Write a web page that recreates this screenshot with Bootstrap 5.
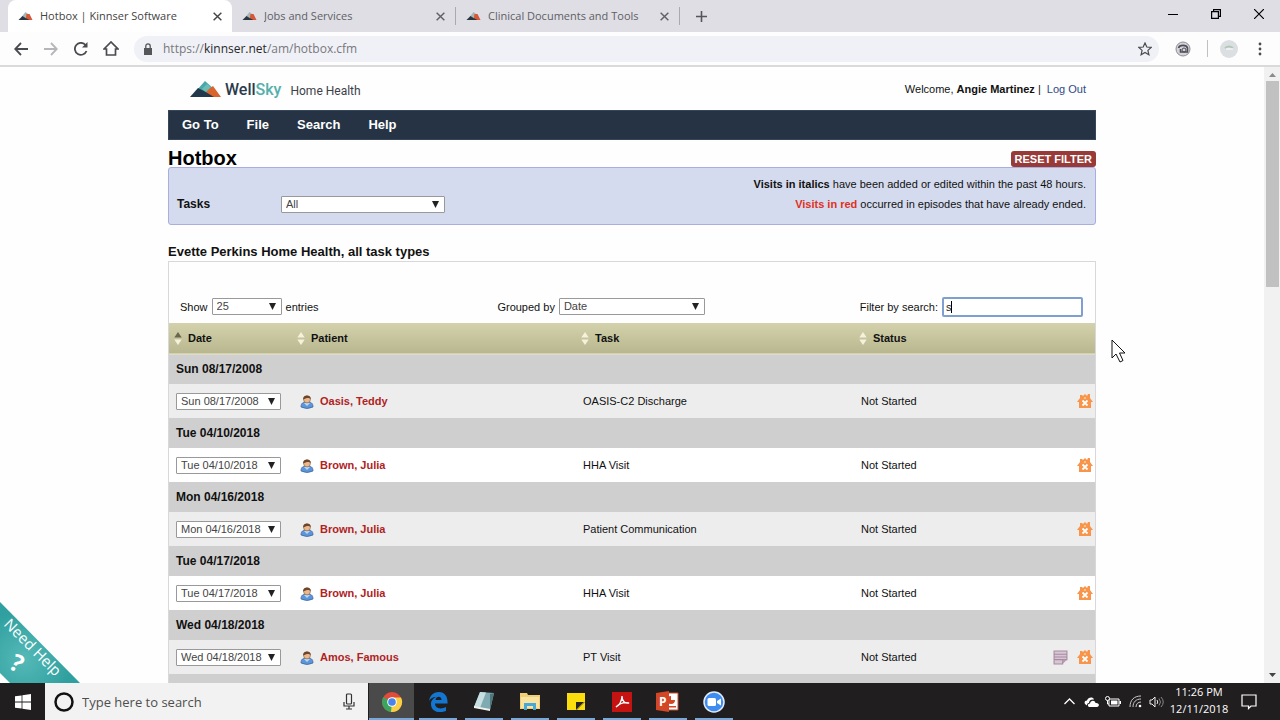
<!DOCTYPE html>
<html lang="en">
<head>
<meta charset="utf-8">
<meta name="viewport" content="width=device-width, initial-scale=1">
<title>Hotbox | Kinnser Software</title>
<link href="https://cdn.jsdelivr.net/npm/bootstrap@5.3.0/dist/css/bootstrap.min.css" rel="stylesheet">
<style>
  :root { --ui: "Open Sans", "Noto Sans", sans-serif; --page: "Liberation Sans", Arial, sans-serif; }
  body { font-family: var(--page); font-size: 11px; line-height: 16px; color: #111; background: #fff; }
  svg { display: block; flex: none; }
  button { border: 0; background: none; padding: 0; color: inherit; }

  /* browser window */
  .tabstrip { height: 32px; background: #dedee4; font: 11px/16px var(--ui); color: #5f6064; padding-left: 8px; }
  .browser-tab { width: 224px; padding: 0 9px 0 10px; gap: 7px; }
  .browser-tab.current { background: #fff; color: #444; border-radius: 8px 8px 0 0; }
  .browser-tab.divided { border-right: 1px solid #a9a9ae; height: 18px; }
  .win-btn { width: 43px; }
  .addressbar { height: 35px; border-bottom: 2px solid #dadada; background: #fdfdfe; padding-left: 6px; }
  .nav-btn { width: 30px; color: #4a4b4f; }
  .urlbox { background: #f0f1f6; border-radius: 13px; height: 26px; padding: 0 7px; margin-left: 8px; }
  .url-text { font: 12px/18px var(--ui); color: #77787c; }
  .url-text b { font-weight: 400; color: #26272a; }
  .more-btn { padding: 0 16px 0 18px; }

  /* page */
  .viewport { min-height: 0; background: #fefefe; }
  .site { width: 928px; max-width: 100%; }
  .masthead { height: 43px; padding: 1px 10px 0 22px; }
  .brand-name { font: 500 16px/18px Roboto, sans-serif; color: #2b3b4b; padding-top: 1px; }
  .brand-name span { color: #55b0ac; }
  .brand-unit { font: 12px/18px Roboto, sans-serif; color: #3c4149; padding-top: 3px; margin-left: 9px; }
  .account a { color: #2f4a86; }
  .menu-bar { height: 30px; background: #253344; border: 1px solid #35465a; padding: 0 13px; gap: 28px; font-size: 13px; font-weight: 700; }
  .menu-bar a { color: #fff; text-decoration: none; }
  .title-row { height: 27px; }
  .page-title { font-size: 20px; line-height: 18px; font-weight: 700; color: #000; margin: 0; }
  .reset-btn { background: #983a38; color: #fff; font-weight: 700; font-size: 11px; line-height: 16px; border-radius: 3px; padding: 0 4px; }
  .filter-panel { background: #d5dbee; border: 1px solid #a9aee0; border-radius: 3px; height: 58px; padding: 6px 9px 0 8px; }
  .task-filter { padding-top: 10px; }
  .task-filter label { width: 104px; font-size: 12px; }
  .legend-lines { line-height: 20px; }
  .red-note { color: #e0311f; }
  .section-title { font-size: 13px; line-height: 18px; font-weight: 700; margin: 18px 0 0; color: #111; }
  .grid-box { border: 1px solid #d8d8d8; border-bottom: 0; }
  .grid-tools { height: 61px; padding: 28px 12px 0 11px; }
  .picker, .search-field { height: 17px; border: 1px solid #999; border-radius: 1px; background-color: #fff; color: #444; font-size: 11px; line-height: 15px; padding: 0 14px 0 4px; }
  .picker { appearance: none; background-image: url("data:image/svg+xml,%3Csvg xmlns='http://www.w3.org/2000/svg' width='7' height='7'%3E%3Cpath d='M0 0h7L3.5 7z' fill='%23222'/%3E%3C/svg%3E"); background-repeat: no-repeat; background-position: right 5px center; }
  .w-tasks { width: 164px; } .w-size { width: 70px; } .w-group { width: 146px; } .w-date { width: 105px; }
  .search-field { width: 141px; height: 20px; border: 2px solid #7f9fd0; border-radius: 2px; padding: 0 2px; outline: 0; color: #222; caret-color: transparent; }
  .caret-mark { left: 9px; top: 4px; width: 1px; height: 12px; background: #000; }

  .task-grid { --bs-table-color: #111; table-layout: fixed; font-size: 11px; }
  .task-grid > :not(caption) > * > * { padding: 0 7px; border: 0; box-shadow: none; vertical-align: middle; }
  .task-grid .c-date { width: 123px; } .task-grid .c-patient { width: 284px; } .task-grid .c-task { width: 278px; }
  .task-grid thead tr { height: 31px; background: linear-gradient(#d3d2ac, #b9b78f); border-bottom: 1px solid #dedcc8; --bs-table-bg: transparent; }
  .task-grid thead th { padding: 0 5px !important; }
  .task-grid thead th div { gap: 6px; }
  .group-row { height: 30px; --bs-table-bg: #cfcfcf; font-size: 12px; }
  .task-row { height: 34px; --bs-table-bg: #fff; }
  .task-row.alt { --bs-table-bg: #ededed; }
  .task-row td:last-child { padding-right: 2px !important; }
  .patient { color: #b0231f; font-weight: 700; text-decoration: none; gap: 6px; padding-left: 1px; }
  .row-actions { gap: 9px; }
  .help-ribbon { left: 0; bottom: 0; }
  .pointer { left: 1111px; top: 272px; }
  .scroll-rail { width: 16px; background: #f1f1f1; padding: 6px 1px 6px 2px; }
  .scroll-thumb { height: 206px; background: #c1c1c1; margin-top: 4px; }

  /* desktop bar */
  .taskbar { height: 37px; background: #211e1f; font-family: var(--ui); color: #fff; }
  .start-btn { width: 45px; }
  .desk-search { width: 323px; background: #f2f2f2; padding: 0 12px 0 9px; gap: 8px; }
  .desk-search input { border: 0; background: none; outline: 0; padding: 0; font: 13px/18px var(--ui); min-width: 0; }
  .desk-search input::placeholder { color: #4e4e4e; opacity: 1; }
  .app-btn { width: 46px; border-right: 1px solid #211e1f; padding-top: 2px; }
  .app-btn::after { content: ""; height: 2px; width: 38px; background: #76a9dc; }
  .app-btn.running { background: #4b4a4b; margin-left: 1px; }
  .app-btn.running::after { width: 45px; }
  .tray-btn { width: 22px; }
  .clock { width: 62px; font: 11px/17px var(--ui); text-align: center; padding-bottom: 3px; }
  .notice-btn { width: 38px; margin-right: 12px; }
</style>
</head>
<body class="vh-100 d-flex flex-column overflow-hidden">

<svg width="0" height="0" class="position-absolute" aria-hidden="true">
  <symbol id="favicon" viewBox="0 0 14 10"><path d="M3 6l4-5 4 3-2 5z" fill="#a9b6b6"/><path d="M8 3l3 0 3 6H7z" fill="#d5583a"/><path d="M0 9l4-4 3 2 4 2z" fill="#293540"/></symbol>
  <symbol id="close" viewBox="0 0 10 10"><path d="M1.500 1.500l7 7m0-7l-7 7" stroke="currentColor" stroke-width="1.300"/></symbol>
  <symbol id="person" viewBox="0 0 14 15"><path d="M1 13c0-4 2-5 6-5s6 1 6 5q-6 3-12 0z" fill="#5d96d8" stroke="#3b68a4" stroke-width=".8"/><path d="M4 9l3 3 3-3z" fill="#b9d8f5"/><circle cx="7" cy="5.500" r="3.400" fill="#e9b98e" stroke="#8a5a36" stroke-width=".6"/><path d="M3.200 5.500C2.500 0 11.500 0 10.800 5.500 9.500 3 6 4 3.200 5.500z" fill="#6f4428"/></symbol>
  <symbol id="house" viewBox="0 0 16 15"><path d="M8 0l2 2 1-2h2v4l3 4h-2v6H2V8H0l3-4V1h2l1 1z" fill="#f7954a"/><path d="M5.500 6.500l5 5M10.500 6.500l-5 5" stroke="#fff" stroke-width="1.800"/><circle cx="8" cy="4" r="1" fill="#ffd2a8"/></symbol>
  <symbol id="note" viewBox="0 0 14 14"><path d="M1 1h12v8H9v4H1z" fill="#d9c6d5" stroke="#a78aa2"/><path d="M1 4h12M1 6.500h12M1 9h8" stroke="#a78aa2"/><path d="M9 13l4-4H9z" fill="#b79bb1"/></symbol>
  <symbol id="sort" viewBox="0 0 8 14"><path d="M4 0l4 6H0z" fill="#f5f2dc"/><path d="M4 14l4-6H0z" fill="#f5f2dc"/></symbol>
  <symbol id="sort-up" viewBox="0 0 8 14"><path d="M4 0l4 6H0z" fill="#67664e"/><path d="M4 14l4-6H0z" fill="#f5f2dc"/></symbol>
</svg>

<header>
  <div class="tabstrip d-flex align-items-center">
    <div class="browser-tab current d-flex align-items-center h-100"><svg width="15" height="10"><use href="#favicon"/></svg><span class="flex-grow-1 text-truncate">Hotbox | Kinnser Software</span><button aria-label="Close tab"><svg width="11" height="11"><use href="#close"/></svg></button></div>
    <div class="browser-tab divided d-flex align-items-center"><svg width="15" height="10"><use href="#favicon"/></svg><span class="flex-grow-1 text-truncate">Jobs and Services</span><button aria-label="Close tab"><svg width="11" height="11"><use href="#close"/></svg></button></div>
    <div class="browser-tab divided d-flex align-items-center"><svg width="15" height="10"><use href="#favicon"/></svg><span class="flex-grow-1 text-truncate">Clinical Documents and Tools</span><button aria-label="Close tab"><svg width="11" height="11"><use href="#close"/></svg></button></div>
    <button class="ms-3" aria-label="New tab"><svg width="11" height="11" viewBox="0 0 11 11"><path d="M5.500 0v11M0 5.500h11" stroke="#55565a" stroke-width="1.600"/></svg></button>
    <div class="ms-auto d-flex align-items-center text-black pb-1">
      <button class="win-btn" aria-label="Minimize"><svg class="mx-auto" width="10" height="10"><path d="M0 5.500h10" stroke="#000"/></svg></button>
      <button class="win-btn" aria-label="Restore"><svg class="mx-auto" width="10" height="10" viewBox="0 0 10 10" fill="none" stroke="#000" stroke-width="1.200"><path d="M.6 2.600h6.800v6.800H.6zM2.600 2.600v-2h6.800v6.800h-2"/></svg></button>
      <button class="win-btn" aria-label="Close"><svg class="mx-auto" width="10" height="10"><path d="M0 0l10 10M10 0L0 10" stroke="#000" stroke-width="1.200"/></svg></button>
    </div>
  </div>
  <div class="addressbar d-flex align-items-center">
    <button class="nav-btn" aria-label="Back"><svg class="mx-auto" width="14" height="14" viewBox="0 0 14 14" fill="none" stroke="currentColor" stroke-width="1.800"><path d="M14 7H1.500M7 1L1.200 7 7 13"/></svg></button>
    <button class="nav-btn" aria-label="Forward"><svg class="mx-auto" width="14" height="14" viewBox="0 0 14 14" fill="none" stroke="#b5b6b9" stroke-width="1.800"><path d="M0 7h12.500M7 1l5.800 6L7 13"/></svg></button>
    <button class="nav-btn" aria-label="Reload"><svg class="mx-auto" width="14" height="14" viewBox="0 0 14 14" fill="none" stroke="currentColor" stroke-width="1.800"><path d="M12.500 9A6 6 0 1 1 11.500 3l1 1.200"/><path d="M13.500 0v5.500H8z" fill="currentColor" stroke="none"/></svg></button>
    <button class="nav-btn" aria-label="Home"><svg class="mx-auto" width="16" height="15" viewBox="0 0 16 15" fill="none" stroke="currentColor" stroke-width="1.700"><path d="M1 8l7-7 7 7h-2.500v6h-9V8z"/></svg></button>
    <div class="urlbox flex-grow-1 d-flex align-items-center">
      <svg class="me-2" width="14" height="12" viewBox="0 0 14 12"><path d="M3 5h8v7H3z" fill="#55565a"/><path d="M4.800 5V3a2.200 2.200 0 0 1 4.400 0v2" fill="none" stroke="#55565a" stroke-width="1.300"/></svg>
      <span class="url-text flex-grow-1">https://<b>kinnser.net</b>/am/hotbox.cfm</span>
      <button aria-label="Bookmark"><svg width="14" height="14" viewBox="0 0 14 14"><path d="M7 1l1.800 4 4.400.4-3.300 3 1 4.300L7 10.400l-3.900 2.300 1-4.300-3.300-3L5.200 5z" fill="none" stroke="#4a4b4f" stroke-width="1.200"/></svg></button>
    </div>
    <button class="ms-3" aria-label="Extension"><svg width="16" height="16" viewBox="0 0 16 16"><circle cx="8" cy="8" r="7" fill="#d4d4d8" stroke="#8d8d94"/><path d="M3.500 7c1-3.500 8-3.500 9 0v4h-7V8" fill="none" stroke="#4d4d58" stroke-width="1.600"/><circle cx="9" cy="9" r="2" fill="none" stroke="#4d4d58"/></svg></button>
    <span class="vr ms-3 my-2"></span>
    <button class="ms-2 ps-1" aria-label="Profile"><svg width="18" height="18" viewBox="0 0 18 18"><circle cx="9" cy="9" r="9" fill="#dcdfe2"/><path d="M5 8q4-3 8 0" stroke="#b3c6b8" stroke-width="2" fill="none"/><path d="M6 9h7" stroke="#fff"/></svg></button>
    <button class="more-btn" aria-label="Browser menu"><svg width="8" height="14" viewBox="0 0 8 14" fill="#4a4b4f"><circle cx="4" cy="2" r="1.400"/><circle cx="4" cy="7" r="1.400"/><circle cx="4" cy="12" r="1.400"/></svg></button>
  </div>
</header>

<div class="viewport flex-grow-1 d-flex position-relative overflow-hidden">
  <main class="flex-grow-1 overflow-hidden">
    <div class="site mx-auto">
      <div class="masthead d-flex align-items-center">
        <svg width="31" height="17" viewBox="0 0 31 17"><path d="M6 10L15 0l9 8-6 7z" fill="#4ba8a8"/><path d="M16 10l7-5 8 11H18z" fill="#d9652d"/><path d="M0 16l8-9 6 3 10 6z" fill="#22384b"/><path d="M12 8l5-5 4 3-5 5z" fill="#6cbcb8"/></svg>
        <span class="brand-name ms-1">Well<span>Sky</span></span>
        <span class="brand-unit">Home Health</span>
        <div class="account ms-auto">Welcome, <b>Angie Martinez</b> |&nbsp; <a href="#" class="text-decoration-none">Log Out</a></div>
      </div>
      <nav class="menu-bar d-flex align-items-center"><a href="#">Go To</a><a href="#">File</a><a href="#">Search</a><a href="#">Help</a></nav>
      <div class="title-row d-flex justify-content-between align-items-end">
        <h1 class="page-title">Hotbox</h1>
        <button class="reset-btn">RESET FILTER</button>
      </div>
      <section class="filter-panel d-flex justify-content-between">
        <div class="task-filter d-flex align-items-center">
          <label for="tasks" class="fw-bold">Tasks</label>
          <select id="tasks" class="picker w-tasks"><option>All</option></select>
        </div>
        <div class="legend-lines text-end"><b>Visits in italics</b> have been added or edited within the past 48 hours.<br><b class="red-note">Visits in red</b> occurred in episodes that have already ended.</div>
      </section>
      <h2 class="section-title">Evette Perkins Home Health, all task types</h2>
      <section class="grid-box">
        <div class="grid-tools d-flex align-items-center justify-content-between">
          <div class="d-flex align-items-center gap-1"><label for="size">Show</label><select id="size" class="picker w-size"><option>25</option></select><span>entries</span></div>
          <div class="d-flex align-items-center gap-1 ms-4"><label for="group">Grouped by</label><select id="group" class="picker w-group"><option>Date</option></select></div>
          <div class="d-flex align-items-center gap-1"><label for="search">Filter by search:</label><div class="position-relative"><input id="search" class="search-field d-block" type="text" value="s"><span class="caret-mark position-absolute"></span></div></div>
        </div>
        <table class="table task-grid mb-0">
          <thead><tr>
            <th class="c-date"><div class="d-flex align-items-center"><svg width="8" height="13"><use href="#sort-up"/></svg>Date</div></th>
            <th class="c-patient"><div class="d-flex align-items-center"><svg width="8" height="13"><use href="#sort"/></svg>Patient</div></th>
            <th class="c-task"><div class="d-flex align-items-center"><svg width="8" height="13"><use href="#sort"/></svg>Task</div></th>
            <th><div class="d-flex align-items-center"><svg width="8" height="13"><use href="#sort"/></svg>Status</div></th>
          </tr></thead>
          <tbody>
            <tr class="group-row"><th colspan="4">Sun 08/17/2008</th></tr>
            <tr class="task-row alt"><td><select class="picker w-date" aria-label="Visit date"><option>Sun 08/17/2008</option></select></td><td><a href="#" class="patient d-flex align-items-center"><svg width="14" height="15"><use href="#person"/></svg>Oasis, Teddy</a></td><td>OASIS-C2 Discharge</td><td><div class="row-actions d-flex align-items-center">Not Started<button class="ms-auto" aria-label="Mark missed"><svg width="16" height="15"><use href="#house"/></svg></button></div></td></tr>
            <tr class="group-row"><th colspan="4">Tue 04/10/2018</th></tr>
            <tr class="task-row"><td><select class="picker w-date" aria-label="Visit date"><option>Tue 04/10/2018</option></select></td><td><a href="#" class="patient d-flex align-items-center"><svg width="14" height="15"><use href="#person"/></svg>Brown, Julia</a></td><td>HHA Visit</td><td><div class="row-actions d-flex align-items-center">Not Started<button class="ms-auto" aria-label="Mark missed"><svg width="16" height="15"><use href="#house"/></svg></button></div></td></tr>
            <tr class="group-row"><th colspan="4">Mon 04/16/2018</th></tr>
            <tr class="task-row alt"><td><select class="picker w-date" aria-label="Visit date"><option>Mon 04/16/2018</option></select></td><td><a href="#" class="patient d-flex align-items-center"><svg width="14" height="15"><use href="#person"/></svg>Brown, Julia</a></td><td>Patient Communication</td><td><div class="row-actions d-flex align-items-center">Not Started<button class="ms-auto" aria-label="Mark missed"><svg width="16" height="15"><use href="#house"/></svg></button></div></td></tr>
            <tr class="group-row"><th colspan="4">Tue 04/17/2018</th></tr>
            <tr class="task-row"><td><select class="picker w-date" aria-label="Visit date"><option>Tue 04/17/2018</option></select></td><td><a href="#" class="patient d-flex align-items-center"><svg width="14" height="15"><use href="#person"/></svg>Brown, Julia</a></td><td>HHA Visit</td><td><div class="row-actions d-flex align-items-center">Not Started<button class="ms-auto" aria-label="Mark missed"><svg width="16" height="15"><use href="#house"/></svg></button></div></td></tr>
            <tr class="group-row"><th colspan="4">Wed 04/18/2018</th></tr>
            <tr class="task-row alt"><td><select class="picker w-date" aria-label="Visit date"><option>Wed 04/18/2018</option></select></td><td><a href="#" class="patient d-flex align-items-center"><svg width="14" height="15"><use href="#person"/></svg>Amos, Famous</a></td><td>PT Visit</td><td><div class="row-actions d-flex align-items-center">Not Started<button class="ms-auto" aria-label="Note"><svg width="15" height="15"><use href="#note"/></svg></button><button aria-label="Mark missed"><svg width="16" height="15"><use href="#house"/></svg></button></div></td></tr>
            <tr class="group-row"><th colspan="4"></th></tr>
          </tbody>
        </table>
      </section>
    </div>
  </main>
  <div class="scroll-rail d-flex flex-column">
    <svg class="mx-auto" width="7" height="4"><path d="M0 4l3.500-4L7 4z" fill="#8b8b8b"/></svg>
    <div class="scroll-thumb"></div>
    <svg class="mx-auto mt-auto" width="7" height="4"><path d="M0 0l3.500 4L7 0z" fill="#444"/></svg>
  </div>
  <a href="#" class="help-ribbon position-absolute"><svg width="80" height="81" viewBox="0 0 80 81"><defs><radialGradient id="teal" cx=".3" cy=".7" r=".6"><stop stop-color="#55b9b7"/><stop offset="1" stop-color="#2fa09f"/></radialGradient></defs><path d="M0 0l80 81H10L0 71z" fill="url(#teal)"/><g fill="#fff" font-family="Open Sans, sans-serif"><text transform="translate(3 23) rotate(45)" font-size="15">Need Help</text><text transform="translate(8 66) rotate(28)" font-size="24" font-weight="700">?</text></g></svg></a>
  <svg class="pointer position-absolute" width="15" height="24" viewBox="0 0 15 24"><path d="M1 1v18l4-4 4 8 3-1.500L8.500 14H14z" fill="#fff" stroke="#111"/></svg>
</div>

<footer class="taskbar d-flex align-items-stretch">
  <button class="start-btn" aria-label="Start"><svg class="mx-auto" width="16" height="16" viewBox="0 0 16 16" fill="#fff"><path d="M0 2.300l6.600-.9v6.100H0zM7.400 1.300L16 0v7.500H7.400zM0 8.400h6.600v6.200L0 13.700zM7.400 8.400H16V16l-8.600-1.200z"/></svg></button>
  <div class="desk-search d-flex align-items-center">
    <svg width="20" height="20"><circle cx="10" cy="10" r="8.500" fill="none" stroke="#111" stroke-width="2.500"/></svg>
    <input class="flex-grow-1" type="text" placeholder="Type here to search" aria-label="Type here to search">
    <svg width="14" height="17" viewBox="0 0 14 17" fill="none" stroke="#333" stroke-width="1.200"><rect x="4.500" y="1" width="5" height="10" rx="1"/><path d="M2 9v4h10V9M7 13v3M4 16h6"/></svg>
  </div>
  <button class="app-btn running d-flex flex-column align-items-center justify-content-between" aria-label="Chrome"><span></span><svg width="22" height="22" viewBox="0 0 22 22"><circle cx="11" cy="11" r="10" fill="#e24b3c"/><path d="M11 11L2.340 6A10 10 0 0 0 10 20.950L15 13z" fill="#3ba55b"/><path d="M11 11l-1 9.950A10 10 0 0 0 20 6.500h-9z" fill="#f8cf45"/><circle cx="11" cy="11" r="4.800" fill="#fff"/><circle cx="11" cy="11" r="3.800" fill="#4a83ea"/></svg></button>
  <button class="app-btn d-flex flex-column align-items-center justify-content-between" aria-label="Edge"><span></span><svg width="20" height="20" viewBox="0 0 20 20"><path d="M1 9C2 3 6 0 11 0c6 0 9 5 8.500 11.500H7C7 17 14 17.500 18 15v4C10 22 3 19 3 12c0-4 3-6 5-7C4.500 5 2 7 1 9zm6.500-1h6C13.500 3.500 8 4 7.500 8z" fill="#1377d2" fill-rule="evenodd"/></svg></button>
  <button class="app-btn d-flex flex-column align-items-center justify-content-between" aria-label="Notepad"><span></span><svg width="22" height="21" viewBox="0 0 22 21"><path d="M7 1l14 1-4 17-16-3z" fill="#7faab2"/><path d="M7 1l6 .5L7 17l-6-1z" fill="#c7dfe0"/><path d="M1 15l16 3v2L1 17z" fill="#f0f0ec"/><path d="M17 3l4-1-4 17z" fill="#4f777f"/></svg></button>
  <button class="app-btn d-flex flex-column align-items-center justify-content-between" aria-label="File Explorer"><span></span><svg width="20" height="18" viewBox="0 0 20 18"><path d="M0 0h7l1 2h12v14H0z" fill="#f0cf78"/><path d="M1 4h18v11H1z" fill="#fae3a0"/><path d="M4 17v-7h12v7h-3v-4H7v4z" fill="#48a9d6"/></svg></button>
  <button class="app-btn d-flex flex-column align-items-center justify-content-between" aria-label="Sticky Notes"><span></span><svg width="18" height="17" viewBox="0 0 18 17"><path d="M0 0h18v9l-8 8H0z" fill="#fbdc0d"/><path d="M9 9h8l-8 8z" fill="#262423"/><path d="M18 9v8h-8z" fill="#fbdc0d"/></svg></button>
  <button class="app-btn d-flex flex-column align-items-center justify-content-between" aria-label="Acrobat Reader"><span></span><svg width="20" height="20" viewBox="0 0 20 20"><path d="M0 0h20v20H0z" fill="#c51312"/><path d="M4 15c3-1 6-6 6-11 0 5 3 8 7 7-4-1-9 0-13 4z" fill="none" stroke="#fff" stroke-width="1.300"/></svg></button>
  <button class="app-btn d-flex flex-column align-items-center justify-content-between" aria-label="PowerPoint"><span></span><svg width="23" height="21" viewBox="0 0 23 21"><path d="M12 2h10v17H12z" fill="#fff" stroke="#cf4a2a"/><path d="M15 5a4 4 0 1 0 4 4h-4zM13 15h7v1.500h-7z" fill="#d24726"/><path d="M0 2l13-2v21L0 19z" fill="#d24726"/><text x="3" y="15" font-family="Open Sans, sans-serif" font-size="12" font-weight="700" fill="#fff">P</text></svg></button>
  <button class="app-btn d-flex flex-column align-items-center justify-content-between" aria-label="Zoom"><span></span><svg width="22" height="22" viewBox="0 0 22 22"><circle cx="11" cy="11" r="10" fill="#3f8cf0" stroke="#e3eefc" stroke-width="1.500"/><rect x="4.500" y="7" width="8.500" height="8" rx="1.500" fill="#fff"/><path d="M14 10l4-2.500v7L14 12z" fill="#fff"/></svg></button>
  <div class="ms-auto d-flex align-items-center">
    <button class="tray-btn" aria-label="Show hidden icons"><svg class="mx-auto" width="11" height="7"><path d="M.5 6l5-5 5 5" fill="none" stroke="#fff" stroke-width="1.300"/></svg></button>
    <button class="tray-btn" aria-label="OneDrive"><svg class="mx-auto" width="15" height="10" viewBox="0 0 15 10"><path d="M1 7C0 5 1 3.500 3 3.500 4 0 9-.5 10 2.500 6.500 2 5 4 5 6 3 6 3 8 3 8.500z" fill="#fff"/><path d="M5 10C3 9 4 6.500 6 6.500 6.500 3 11 3 11.500 6 16 5.500 15.500 10 13 10z" fill="#fff"/></svg></button>
    <button class="tray-btn" aria-label="Battery"><svg class="mx-auto" width="16" height="11" viewBox="0 0 16 11"><path d="M4 3h10v7H4z" fill="none" stroke="#fff"/><path d="M6 4.500h6.500v4H6zM14.500 5H16v3h-1.500z" fill="#fff"/><circle cx="2.500" cy="2.500" r="2" fill="#211e1f" stroke="#fff"/><path d="M2.500 4.500V8H4" stroke="#fff" fill="none"/></svg></button>
    <button class="tray-btn" aria-label="Network"><svg class="mx-auto" width="13" height="13" viewBox="0 0 13 13" fill="none" stroke="#ccc"><path d="M1 12C1 5 5 1 12 1M4 12c0-5 3-8 8-8M7 12c0-3 2-5 5-5"/><circle cx="11" cy="11" r="1.300" fill="#fff" stroke="none"/></svg></button>
    <button class="tray-btn" aria-label="Volume"><svg class="mx-auto" width="16" height="12" viewBox="0 0 16 12" fill="none" stroke="#eee"><path d="M1 4h2l3-3v10L3 8H1z"/><path d="M8 4q1.500 2 0 4"/><path d="M10 2.500q3 3.500 0 7M12 1q4.500 5 0 10" stroke="#888"/></svg></button>
    <div class="clock">11:26 PM<br>12/11/2018</div>
    <button class="notice-btn" aria-label="Notifications"><svg class="mx-auto" width="16" height="16" viewBox="0 0 16 16"><path d="M1 1h14v11h-5l-2.500 2.500V12H1z" fill="none" stroke="#fff" stroke-width="1.200"/></svg></button>
  </div>
</footer>
<script src="https://cdn.jsdelivr.net/npm/bootstrap@5.3.0/dist/js/bootstrap.bundle.min.js"></script>
</body>
</html>
